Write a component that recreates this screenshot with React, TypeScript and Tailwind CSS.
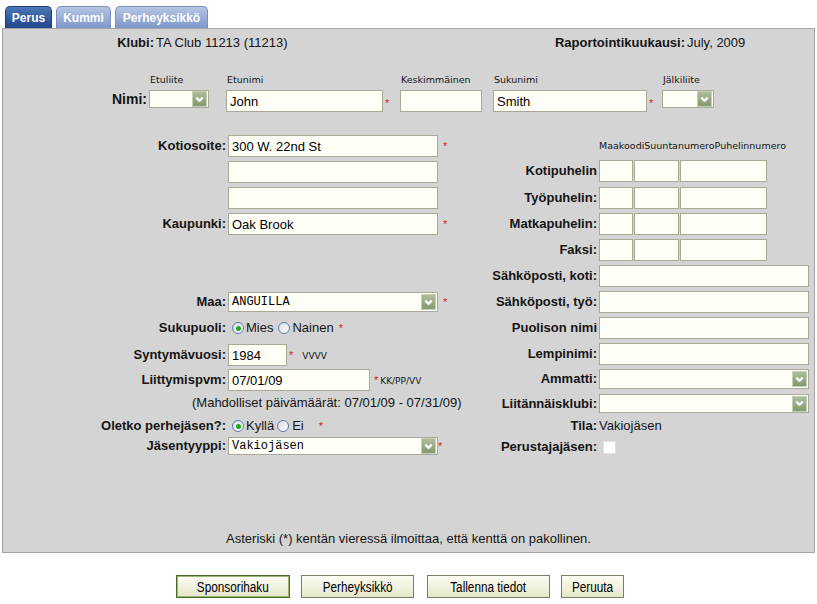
import React from 'react';

const TextInput = ({ w, value = '' }: { w: string; value?: string }) => (
  <input
    readOnly
    value={value}
    className={`block h-[22px] ${w} border border-[#a9a998] bg-[#fffff8] pl-[3px] text-[13px] text-black outline-none`}
  />
);

const Arrow = () => (
  <span className="ml-auto mr-[1px] flex h-[16px] w-[15px] items-center justify-center border border-[#c6d0b8] bg-linear-to-b from-[#aebd9b] to-[#86986f]">
    <svg width="9" height="7" viewBox="0 0 9 7">
      <path d="M1.3 1.6 L4.5 4.8 L7.7 1.6" fill="none" stroke="#fff" strokeWidth="2.2" />
    </svg>
  </span>
);

const Select = ({ w, h, value = '' }: { w: string; h: string; value?: string }) => (
  <div className={`flex items-center ${w} ${h} border border-[#a9a998] bg-[#fffff8]`}>
    <span className="pl-[3px] font-['Liberation_Mono',monospace] text-[12px] text-black">{value}</span>
    <Arrow />
  </div>
);

const Req = () => <span className="text-[11px] leading-none text-[#d42020]">*</span>;

const Radio = ({ checked }: { checked?: boolean }) => (
  <span className="flex h-[12px] w-[12px] items-center justify-center rounded-full border border-[#5b7ba3] bg-linear-to-br from-[#d6dde8] to-white">
    {checked && <span className="h-[5px] w-[5px] rounded-full bg-[#23a523]" />}
  </span>
);

const LeftLabel = ({ children }: { children?: React.ReactNode }) => (
  <div className="mr-[2px] w-[223px] text-right text-[13px] font-bold leading-[16px]">{children}</div>
);

const RightLabel = ({ children }: { children?: React.ReactNode }) => (
  <div className="mr-[2px] w-[137px] text-right text-[13px] font-bold leading-[16px]">{children}</div>
);

const Field = ({ label, children }: { label: string; children: React.ReactNode }) => (
  <div className="flex flex-col">
    <div className="h-[12px] pl-[1px] font-['DejaVu_Sans',sans-serif] text-[9.5px] leading-[12px]">{label}</div>
    <div className="mt-[4px] flex">{children}</div>
  </div>
);

const Tab = ({ label, w, active }: { label: string; w: string; active?: boolean }) => (
  <div
    className={`flex h-[22px] ${w} justify-center rounded-t-[5px] border border-b-0 pt-[4px] text-[12px] font-bold leading-[14px] text-white ${
      active
        ? 'border-[#1d3d73] bg-linear-to-b from-[#4d77b8] to-[#21468a]'
        : 'border-[#7a91c0] bg-linear-to-b from-[#b6c5e4] to-[#7e97ca]'
    }`}
  >
    {label}
  </div>
);

const Button = ({ label, w, primary }: { label: string; w: string; primary?: boolean }) => (
  <button
    className={`flex h-[23px] ${w} items-center justify-center border bg-linear-to-b from-[#fdfdf3] to-[#e6e6cc] text-black ${
      primary ? 'border-[#4c6a26] shadow-[inset_0_0_0_1px_#9bb872]' : 'border-[#7b7b68]'
    }`}
  >
    <span className="inline-block scale-x-[0.84] whitespace-nowrap text-[14px] leading-[20px]">{label}</span>
  </button>
);

export default function App() {
  return (
    <div className="h-[604px] w-[817px] bg-white font-['Liberation_Sans',Arial,sans-serif] text-[#141414]">
      {/* tabs */}
      <div className="flex h-[28px] items-end gap-[4px] pl-[5px]">
        <Tab label="Perus" w="w-[47px]" active />
        <Tab label="Kummi" w="w-[55px]" />
        <Tab label="Perheyksikkö" w="w-[93px]" />
      </div>

      {/* panel */}
      <div className="ml-[2px] flex h-[525px] w-[813px] flex-col border border-[#a3a3a3] bg-[#d4d4d4]">
        <div className="mt-[6px] flex h-[16px] text-[13px] leading-[16px]">
          <div className="w-[151px] text-right font-bold">Klubi:</div>
          <div className="ml-[2px] w-[380px]">TA Club 11213 (11213)</div>
          <div className="w-[149px] text-right font-bold">Raportointikuukausi:</div>
          <div className="ml-[2px]">July, 2009</div>
        </div>

        {/* name */}
        <div className="mt-[23px] flex items-start">
          <div className="w-[146px] pr-[2px] pt-[16px] text-right text-[14px] font-bold leading-[18px]">Nimi:</div>
          <Field label="Etuliite">
            <Select w="w-[60px]" h="h-[18px]" />
          </Field>
          <div className="w-[17px]" />
          <Field label="Etunimi">
            <TextInput w="w-[157px]" value="John" />
          </Field>
          <div className="w-[17px] pl-[2px] pt-[20px] leading-none">
            <Req />
          </div>
          <Field label="Keskimmäinen">
            <TextInput w="w-[82px]" />
          </Field>
          <div className="w-[11px]" />
          <Field label="Sukunimi">
            <TextInput w="w-[154px]" value="Smith" />
          </Field>
          <div className="w-[15px] pl-[2px] pt-[20px] leading-none">
            <Req />
          </div>
          <Field label="Jälkiliite">
            <Select w="w-[52px]" h="h-[18px]" />
          </Field>
        </div>

        {/* columns */}
        <div className="mt-[23px] flex text-[13px]">
          <div className="flex w-[457px] flex-col">
            <div className="flex h-[22px] items-center">
              <LeftLabel>Kotiosoite:</LeftLabel>
              <TextInput w="w-[210px]" value="300 W. 22nd St" />
              <span className="ml-[5px] flex"><Req /></span>
            </div>
            <div className="mt-[4px] flex h-[22px] items-center">
              <LeftLabel />
              <TextInput w="w-[210px]" />
            </div>
            <div className="mt-[4px] flex h-[22px] items-center">
              <LeftLabel />
              <TextInput w="w-[210px]" />
            </div>
            <div className="mt-[4px] flex h-[22px] items-center">
              <LeftLabel>Kaupunki:</LeftLabel>
              <TextInput w="w-[210px]" value="Oak Brook" />
              <span className="ml-[5px] flex"><Req /></span>
            </div>
            <div className="mt-[57px] flex h-[20px] items-center">
              <LeftLabel>Maa:</LeftLabel>
              <Select w="w-[210px]" h="h-[20px]" value="ANGUILLA" />
              <span className="ml-[5px] flex"><Req /></span>
            </div>
            <div className="mt-[6px] flex h-[20px] items-center">
              <LeftLabel>Sukupuoli:</LeftLabel>
              <span className="ml-[4px]"><Radio checked /></span>
              <span className="ml-[2px]">Mies</span>
              <span className="ml-[5px]"><Radio /></span>
              <span className="ml-[2px]">Nainen</span>
              <span className="ml-[5px] flex"><Req /></span>
            </div>
            <div className="mt-[6px] flex h-[22px] items-center">
              <LeftLabel>Syntymävuosi:</LeftLabel>
              <TextInput w="w-[59px]" value="1984" />
              <span className="ml-[2px] flex"><Req /></span>
              <span className="ml-[9px] pt-[4px] font-['DejaVu_Sans',sans-serif] text-[9px]">VVVV</span>
            </div>
            <div className="mt-[3px] flex h-[22px] items-center">
              <LeftLabel>Liittymispvm:</LeftLabel>
              <TextInput w="w-[142px]" value="07/01/09" />
              <span className="ml-[4px] flex"><Req /></span>
              <span className="ml-[2px] pt-[4px] font-['DejaVu_Sans',sans-serif] text-[9px]">KK/PP/VV</span>
            </div>
            <div className="mt-[5px] flex h-[14px] items-center whitespace-nowrap pl-[189px] leading-[14px]">
              (Mahdolliset päivämäärät: 07/01/09 - 07/31/09)
            </div>
            <div className="mt-[6px] flex h-[20px] items-center">
              <LeftLabel>Oletko perhejäsen?:</LeftLabel>
              <span className="ml-[4px]"><Radio checked /></span>
              <span className="ml-[2px]">Kyllä</span>
              <span className="ml-[3px]"><Radio /></span>
              <span className="ml-[3px]">Ei</span>
              <span className="ml-[15px] flex"><Req /></span>
            </div>
            <div className="mt-[1px] flex h-[18px] items-center">
              <LeftLabel>Jäsentyyppi:</LeftLabel>
              <Select w="w-[210px]" h="h-[18px]" value="Vakiojäsen" />
              <Req />
            </div>
          </div>

          <div className="flex flex-col">
            <div className="h-[25px] pl-[139px] pt-[6px] font-['DejaVu_Sans',sans-serif] text-[9.5px] leading-[10px]">
              MaakoodiSuuntanumeroPuhelinnumero
            </div>
            {['Kotipuhelin', 'Työpuhelin:', 'Matkapuhelin:', 'Faksi:'].map((l, i) => (
              <div key={l} className={`flex h-[22px] items-center ${i === 0 ? '' : i === 1 ? 'mt-[5px]' : 'mt-[4px]'}`}>
                <RightLabel>{l}</RightLabel>
                <TextInput w="w-[34px]" />
                <span className="ml-[1px] flex"><TextInput w="w-[45px]" /></span>
                <span className="ml-[1px] flex"><TextInput w="w-[87px]" /></span>
              </div>
            ))}
            {['Sähköposti, koti:', 'Sähköposti, työ:', 'Puolison nimi', 'Lempinimi:'].map((l) => (
              <div key={l} className="mt-[4px] flex h-[22px] items-center">
                <RightLabel>{l}</RightLabel>
                <TextInput w="w-[210px]" />
              </div>
            ))}
            <div className="mt-[4px] flex h-[20px] items-center">
              <RightLabel>Ammatti:</RightLabel>
              <Select w="w-[210px]" h="h-[20px]" />
            </div>
            <div className="mt-[5px] flex h-[19px] items-center">
              <RightLabel>Liitännäisklubi:</RightLabel>
              <Select w="w-[210px]" h="h-[19px]" />
            </div>
            <div className="mt-[3px] flex h-[20px] items-center">
              <RightLabel>Tila:</RightLabel>
              <span>Vakiojäsen</span>
            </div>
            <div className="mt-[1px] flex h-[20px] items-center">
              <RightLabel>Perustajajäsen:</RightLabel>
              <span className="ml-[4px] h-[13px] w-[13px] border border-[#e2e2e2] bg-white" />
            </div>
          </div>
        </div>

        <div className="mt-auto pb-[5px] text-center text-[13px] leading-[16px]">
          Asteriski (*) kentän vieressä ilmoittaa, että kenttä on pakollinen.
        </div>
      </div>

      {/* buttons */}
      <div className="ml-[176px] mt-[22px] flex">
        <Button label="Sponsorihaku" w="w-[114px]" primary />
        <span className="ml-[11px] flex"><Button label="Perheyksikkö" w="w-[113px]" /></span>
        <span className="ml-[13px] flex"><Button label="Tallenna tiedot" w="w-[123px]" /></span>
        <span className="ml-[11px] flex"><Button label="Peruuta" w="w-[63px]" /></span>
      </div>
    </div>
  );
}
